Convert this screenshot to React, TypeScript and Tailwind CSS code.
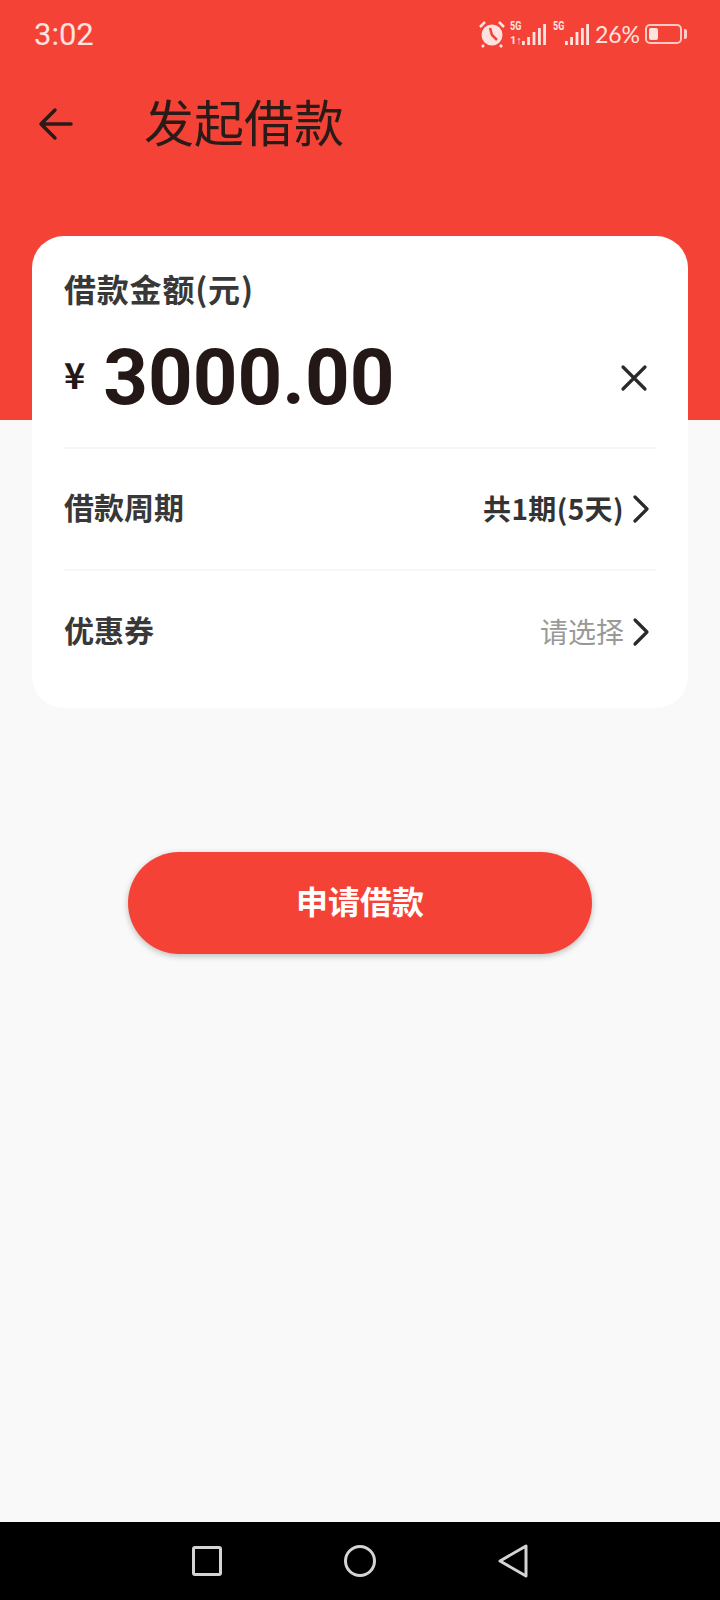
const CJK = "font-['Noto_Sans_CJK_SC','Roboto',sans-serif]";

const ChevronRight = () => (
  <svg width="20" height="30" viewBox="0 0 20 30" fill="none" stroke="#2a2a2a" strokeWidth="3.2" strokeLinecap="round" strokeLinejoin="round">
    <path d="M4 3l12 12L4 27" />
  </svg>
);

const Alarm = () => (
  <svg width="28" height="28" viewBox="0 0 28 28" fill="none">
    <circle cx="14" cy="15" r="10.5" fill="#ffe3e0" />
    <path d="M12 8l2 7 5 5" stroke="#f44336" strokeWidth="2.5" />
    <path d="M2 7l5-5M26 7l-5-5M6 25l-2 2M22 25l2 2" stroke="#ffe3e0" strokeWidth="2.5" />
  </svg>
);

const Bars = () => (
  <svg width="24" height="22" viewBox="0 0 24 22" fill="#ffe3e0">
    <rect x="0" y="17" width="2.8" height="4" />
    <rect x="5.2" y="13" width="2.8" height="8" />
    <rect x="10.6" y="8" width="2.8" height="13" />
    <rect x="16" y="4" width="2.8" height="17" />
    <rect x="21.2" y="0" width="2.8" height="21" />
  </svg>
);

const Signal = ({ extra }: { extra?: boolean }) => (
  <div className="relative w-[36px] h-[24px] flex justify-end items-end">
    <span className="absolute left-0 top-[-2px] text-[12px] leading-[12px] font-bold text-[#ffe3e0] font-['Roboto',sans-serif] scale-x-75 origin-left">5G</span>
    {extra && <span className="absolute left-0 bottom-0 text-[11px] leading-[11px] font-bold text-[#ffe3e0] font-['Roboto',sans-serif]">1↑</span>}
    <Bars />
  </div>
);

const Battery = () => (
  <div className="flex items-center gap-[2px]">
    <div className="w-[37px] h-[20px] rounded-[5px] border-2 border-[#ffc9c4] p-[2px]">
      <div className="w-[9px] h-full rounded-[2px] bg-[#ffe3e0]" />
    </div>
    <div className="w-[3px] h-[10px] rounded-r-[2px] bg-[#ffc9c4]" />
  </div>
);

export default function App() {
  return (
    <div className={`w-[720px] h-[1600px] flex flex-col bg-[#f9f9f9] ${CJK}`}>
      {/* Header */}
      <div className="h-[420px] shrink-0 bg-[#f44336]">
        <div className="h-[68px] pl-[34px] pr-[33px] flex items-center justify-between">
          <span className="text-[31px] leading-none text-[#ffe3e0] font-['Roboto',sans-serif]">3:02</span>
          <div className="flex items-center">
            <Alarm />
            <div className="ml-[4px]"><Signal extra /></div>
            <div className="ml-[7px]"><Signal /></div>
            <span className="ml-[6px] text-[23px] leading-none text-[#ffe3e0] font-['Lato',sans-serif]">26%</span>
            <div className="ml-[5px]"><Battery /></div>
          </div>
        </div>
        <div className="h-[112px] pl-[38px] flex items-center">
          <svg width="36" height="36" viewBox="0 0 36 36" fill="none" stroke="#2a1a18" strokeWidth="3.5" strokeLinecap="round" strokeLinejoin="round">
            <path d="M33 18H4M17 4L3 18l14 14" />
          </svg>
          <h1 className="ml-[70px] pb-[8px] text-[50px] leading-none font-normal text-[#2a1a18]">发起借款</h1>
        </div>
      </div>

      {/* Card */}
      <div className="mx-[32px] mt-[-184px] h-[472px] shrink-0 rounded-[32px] bg-white px-[32px]">
        <div className="h-[213px] border-b-2 border-[#f7f7f7] pt-[30px]">
          <div className="text-[32px] leading-[44px] font-bold text-[#383838] tracking-[0.8px]">借款金额(元)</div>
          <div className="mt-[20px] flex items-center justify-between">
            <div className="flex items-center">
              <span className="pb-[10px] text-[36px] leading-none font-bold text-[#231815]">¥</span>
              <span className="ml-[18px] text-[78px] leading-[96px] font-bold text-[#231815] font-['Roboto',sans-serif]">3000.00</span>
            </div>
            <svg className="mr-[8px]" width="28" height="28" viewBox="0 0 28 28" fill="none" stroke="#2a2a2a" strokeWidth="3.2" strokeLinecap="round">
              <path d="M3 3l22 22M25 3L3 25" />
            </svg>
          </div>
        </div>
        <div className="h-[122px] border-b-2 border-[#f7f7f7] flex items-center justify-between">
          <span className="pb-[5px] text-[30px] font-bold text-[#383838]">借款周期</span>
          <div className="flex items-center gap-[7px] pr-[5px]">
            <span className="pb-[2px] text-[28px] font-bold text-[#333333] tracking-[0.4px]">共1期(5天)</span>
            <ChevronRight />
          </div>
        </div>
        <div className="h-[122px] flex items-center justify-between">
          <span className="pb-[5px] text-[30px] font-bold text-[#383838]">优惠券</span>
          <div className="flex items-center gap-[7px] pr-[5px]">
            <span className="pb-[2px] text-[28px] text-[#999999]">请选择</span>
            <ChevronRight />
          </div>
        </div>
      </div>

      {/* Submit */}
      <button className="mx-auto mt-[144px] w-[464px] h-[102px] shrink-0 rounded-full bg-[#f44336] pb-[7px] text-[32px] font-bold text-white shadow-[0_2px_6px_rgba(0,0,0,0.25)]">
        申请借款
      </button>

      {/* Nav bar */}
      <div className="mt-auto h-[78px] bg-black flex items-center justify-center gap-[122px]">
        <div className="w-[30px] h-[30px] rounded-[3px] border-[3px] border-[#d4d4d4]" />
        <div className="w-[32px] h-[32px] rounded-full border-[3px] border-[#d4d4d4]" />
        <svg width="30" height="34" viewBox="0 0 30 34" fill="none" stroke="#d4d4d4" strokeWidth="3" strokeLinejoin="round">
          <path d="M2 17L28 2v30z" />
        </svg>
      </div>
    </div>
  );
}
